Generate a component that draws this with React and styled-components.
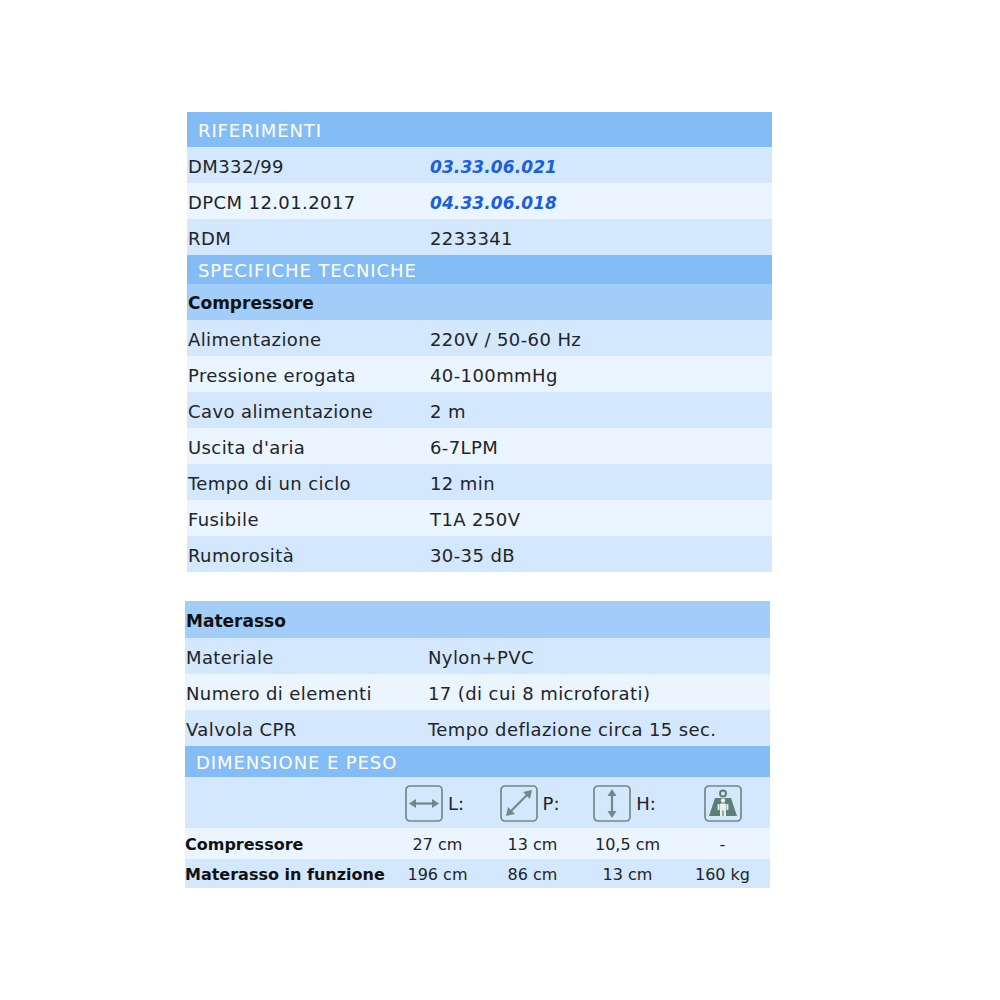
import React from "react";
import styled, { createGlobalStyle } from "styled-components";

const GlobalStyle = createGlobalStyle`
  body {
    margin: 0;
    background: #ffffff;
    font-family: "DejaVu Sans", "Noto Sans", sans-serif;
    color: #222428;
  }
`;

const DARK = "#84bcf6";
const MID = "#a2cdf8";
const TONES = { a: "#d3e7fd", b: "#eaf5ff" };
const ICON = "#6e8c87";

const Page = styled.div`
  width: 1000px;
  height: 1000px;
  padding-top: 112px;
  box-sizing: border-box;
`;

const Table = styled.div`
  width: 585px;
  margin-left: ${(p) => p.$left}px;
  display: flex;
  flex-direction: column;
`;

const Gap = styled.div`
  height: 29px;
`;

const SectionHeader = styled.div`
  height: ${(p) => p.$h}px;
  box-sizing: border-box;
  padding: 2px 0 0 11px;
  background: ${DARK};
  color: #ffffff;
  font-size: 18px;
  text-transform: uppercase;
  display: flex;
  align-items: center;
  letter-spacing: 0.9px;
`;

const GroupRow = styled.div`
  height: ${(p) => p.$h}px;
  box-sizing: border-box;
  padding: 2px 0 0 1px;
  background: ${MID};
  font-size: 17px;
  font-weight: 700;
  color: #111;
  display: flex;
  align-items: center;
`;

const Row = styled.div`
  height: ${(p) => p.$h || 36}px;
  box-sizing: border-box;
  padding: 3px 0 0 1px;
  background: ${(p) => TONES[p.$tone]};
  font-size: 18px;
  letter-spacing: 0.4px;
  display: grid;
  grid-template-columns: 242px 1fr;
  align-items: center;
`;

const Value = styled.span`
  color: ${(p) => (p.$link ? "#1a5fe0" : "inherit")};
  font-weight: ${(p) => (p.$link ? 700 : 400)};
  font-style: ${(p) => (p.$link ? "italic" : "normal")};
  font-size: ${(p) => (p.$link ? 17 : 18)}px;
  letter-spacing: ${(p) => (p.$link ? 0.1 : 0.4)}px;
`;

const DimRow = styled.div`
  height: ${(p) => p.$h}px;
  box-sizing: border-box;
  padding-top: 2px;
  background: ${(p) => TONES[p.$tone]};
  display: grid;
  grid-template-columns: 205px repeat(4, 95px);
  align-items: center;
  font-size: 16px;
`;

const DimLabel = styled.span`
  font-weight: 700;
  color: #111;
`;

const DimCell = styled.span`
  text-align: center;
`;

const IconCell = styled.div`
  display: flex;
  align-items: center;
  justify-content: center;
  gap: 5px;
  font-size: 18px;
  padding-right: ${(p) => (p.$solo ? 0 : 6)}px;
`;

const IconSvg = styled.svg`
  width: 38px;
  height: 37px;
  flex-shrink: 0;
`;

function Box() {
  return (
    <rect x="1" y="1" width="36" height="35" rx="4" fill="none" stroke={ICON} strokeWidth="1.7" />
  );
}

function ArrowH() {
  return (
    <IconSvg viewBox="0 0 38 37">
      <Box />
      <line x1="9" y1="18.5" x2="29" y2="18.5" stroke={ICON} strokeWidth="2.2" />
      <polygon points="4,18.5 11,14 11,23" fill={ICON} />
      <polygon points="34,18.5 27,14 27,23" fill={ICON} />
    </IconSvg>
  );
}

function ArrowD() {
  return (
    <IconSvg viewBox="0 0 38 37">
      <Box />
      <line x1="11" y1="26" x2="27" y2="10" stroke={ICON} strokeWidth="2.2" />
      <polygon points="6,31 8,22 15,29" fill={ICON} />
      <polygon points="32,5 30,14 23,7" fill={ICON} />
    </IconSvg>
  );
}

function ArrowV() {
  return (
    <IconSvg viewBox="0 0 38 37">
      <Box />
      <line x1="19" y1="9" x2="19" y2="28" stroke={ICON} strokeWidth="2.2" />
      <polygon points="19,4 14.5,11 23.5,11" fill={ICON} />
      <polygon points="19,33 14.5,26 23.5,26" fill={ICON} />
    </IconSvg>
  );
}

function Weight() {
  return (
    <IconSvg viewBox="0 0 38 37">
      <Box />
      <circle cx="19" cy="8.5" r="3" fill="none" stroke="#5b7f79" strokeWidth="2" />
      <polygon points="11,13 27,13 33,31 5,31" fill="#5b7f79" />
      <circle cx="19" cy="15.5" r="2.2" fill="#e8f0ef" />
      <rect x="15.5" y="18.5" width="7" height="7" rx="1.5" fill="#e8f0ef" />
      <rect x="16" y="25" width="2.4" height="6" fill="#e8f0ef" />
      <rect x="19.6" y="25" width="2.4" height="6" fill="#e8f0ef" />
      <rect x="13.6" y="19" width="1.6" height="6" fill="#e8f0ef" />
      <rect x="22.8" y="19" width="1.6" height="6" fill="#e8f0ef" />
    </IconSvg>
  );
}

const references = [
  { label: "DM332/99", value: "03.33.06.021", link: true },
  { label: "DPCM 12.01.2017", value: "04.33.06.018", link: true },
  { label: "RDM", value: "2233341" },
];

const compressor = [
  ["Alimentazione", "220V / 50-60 Hz"],
  ["Pressione erogata", "40-100mmHg"],
  ["Cavo alimentazione", "2 m"],
  ["Uscita d'aria", "6-7LPM"],
  ["Tempo di un ciclo", "12 min"],
  ["Fusibile", "T1A 250V"],
  ["Rumorosità", "30-35 dB"],
];

const mattress = [
  ["Materiale", "Nylon+PVC"],
  ["Numero di elementi", "17 (di cui 8 microforati)"],
  ["Valvola CPR", "Tempo deflazione circa 15 sec."],
];

const tone = (i) => (i % 2 === 0 ? "a" : "b");

export default function App() {
  return (
    <Page>
      <GlobalStyle />
      <Table $left={187}>
        <SectionHeader $h={35}>Riferimenti</SectionHeader>
        {references.map((r, i) => (
          <Row key={r.label} $tone={tone(i)}>
            <span>{r.label}</span>
            <Value $link={r.link}>{r.value}</Value>
          </Row>
        ))}
        <SectionHeader $h={29}>Specifiche tecniche</SectionHeader>
        <GroupRow $h={36}>Compressore</GroupRow>
        {compressor.map(([label, value], i) => (
          <Row key={label} $tone={tone(i)}>
            <span>{label}</span>
            <Value>{value}</Value>
          </Row>
        ))}
      </Table>
      <Gap />
      <Table $left={185}>
        <GroupRow $h={37}>Materasso</GroupRow>
        {mattress.map(([label, value], i) => (
          <Row key={label} $tone={tone(i)}>
            <span>{label}</span>
            <Value>{value}</Value>
          </Row>
        ))}
        <SectionHeader $h={31}>Dimensione e peso</SectionHeader>
        <DimRow $h={51} $tone="a">
          <span />
          <IconCell>
            <ArrowH />
            <span>L:</span>
          </IconCell>
          <IconCell>
            <ArrowD />
            <span>P:</span>
          </IconCell>
          <IconCell>
            <ArrowV />
            <span>H:</span>
          </IconCell>
          <IconCell $solo>
            <Weight />
          </IconCell>
        </DimRow>
        <DimRow $h={31} $tone="b">
          <DimLabel>Compressore</DimLabel>
          <DimCell>27 cm</DimCell>
          <DimCell>13 cm</DimCell>
          <DimCell>10,5 cm</DimCell>
          <DimCell>-</DimCell>
        </DimRow>
        <DimRow $h={29} $tone="a">
          <DimLabel>Materasso in funzione</DimLabel>
          <DimCell>196 cm</DimCell>
          <DimCell>86 cm</DimCell>
          <DimCell>13 cm</DimCell>
          <DimCell>160 kg</DimCell>
        </DimRow>
      </Table>
    </Page>
  );
}
